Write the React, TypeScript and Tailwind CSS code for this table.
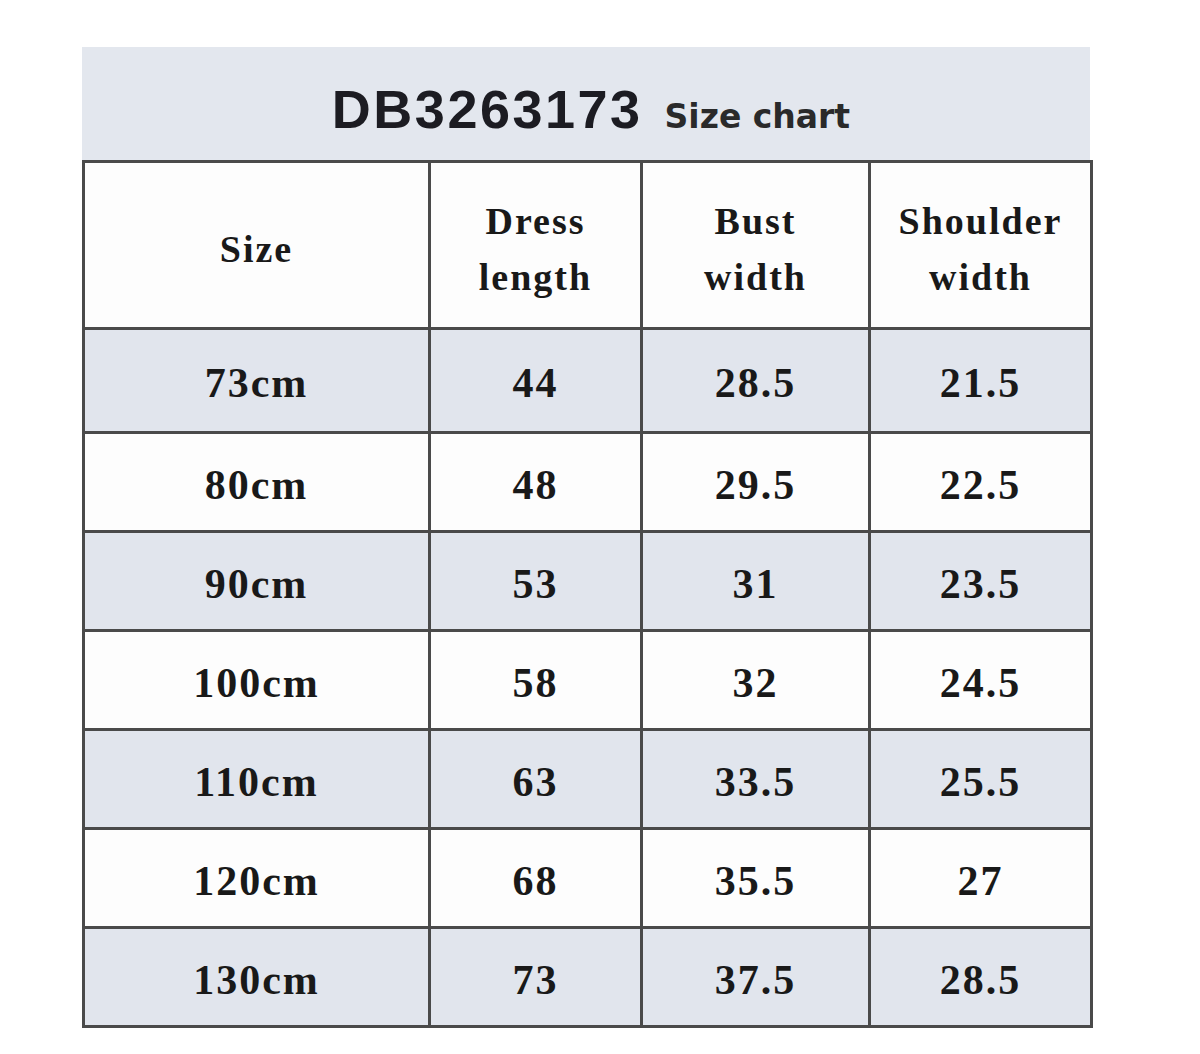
import React from 'react';

type Row = { size: string; length: string; bust: string; shoulder: string };

const rows: Row[] = [
  { size: '73cm', length: '44', bust: '28.5', shoulder: '21.5' },
  { size: '80cm', length: '48', bust: '29.5', shoulder: '22.5' },
  { size: '90cm', length: '53', bust: '31', shoulder: '23.5' },
  { size: '100cm', length: '58', bust: '32', shoulder: '24.5' },
  { size: '110cm', length: '63', bust: '33.5', shoulder: '25.5' },
  { size: '120cm', length: '68', bust: '35.5', shoulder: '27' },
  { size: '130cm', length: '73', bust: '37.5', shoulder: '28.5' },
];

const serif = "font-['Liberation_Serif','Times_New_Roman',serif]";

export default function App() {
  return (
    <div className="w-[1200px] h-[1054px] bg-white pt-[47px] pl-[82px]">
      <div className="w-[1008px]">
        {/* title band */}
        <div className="h-[113px] bg-[#e3e7ee] flex items-center justify-center pt-[10px] pl-[10px]">
          <div className="flex items-baseline gap-[22px] text-[#1c1c22]">
            <span className="font-['Liberation_Sans',Arial,sans-serif] font-bold text-[54px] tracking-[2.5px] leading-none">
              DB3263173
            </span>
            <span className="font-['DejaVu_Sans',Verdana,sans-serif] font-bold text-[33px] leading-none text-[#2a2a2a]">
              Size chart
            </span>
          </div>
        </div>

        {/* table */}
        <table
          className={`w-[1008px] table-fixed border-collapse border-[3px] border-[#4a4a4a] text-[#191919] font-bold ${serif}`}
        >
          <colgroup>
            <col className="w-[346px]" />
            <col className="w-[212px]" />
            <col className="w-[228px]" />
            <col className="w-[222px]" />
          </colgroup>
          <thead>
            <tr className="h-[167px] bg-[#fdfdfd] text-[38px] leading-[56px] tracking-[2px]">
              <th className="border-[3px] border-[#4a4a4a] font-bold pt-[8px]">Size</th>
              <th className="border-[3px] border-[#4a4a4a] font-bold pt-[8px]">
                Dress
                <br />
                length
              </th>
              <th className="border-[3px] border-[#4a4a4a] font-bold pt-[8px]">
                Bust
                <br />
                width
              </th>
              <th className="border-[3px] border-[#4a4a4a] font-bold pt-[8px]">
                Shoulder
                <br />
                width
              </th>
            </tr>
          </thead>
          <tbody>
            {rows.map((r, i) => (
              <tr
                key={r.size}
                className={`text-[42px] tracking-[2px] text-center ${i === 0 ? 'h-[104px]' : 'h-[99px]'} ${
                  i % 2 === 0 ? 'bg-[#e1e5ed]' : 'bg-[#fdfdfd]'
                }`}
              >
                <td className="border-[3px] border-[#4a4a4a] pt-[6px]">{r.size}</td>
                <td className="border-[3px] border-[#4a4a4a] pt-[6px]">{r.length}</td>
                <td className="border-[3px] border-[#4a4a4a] pt-[6px]">{r.bust}</td>
                <td className="border-[3px] border-[#4a4a4a] pt-[6px]">{r.shoulder}</td>
              </tr>
            ))}
          </tbody>
        </table>
      </div>
    </div>
  );
}
